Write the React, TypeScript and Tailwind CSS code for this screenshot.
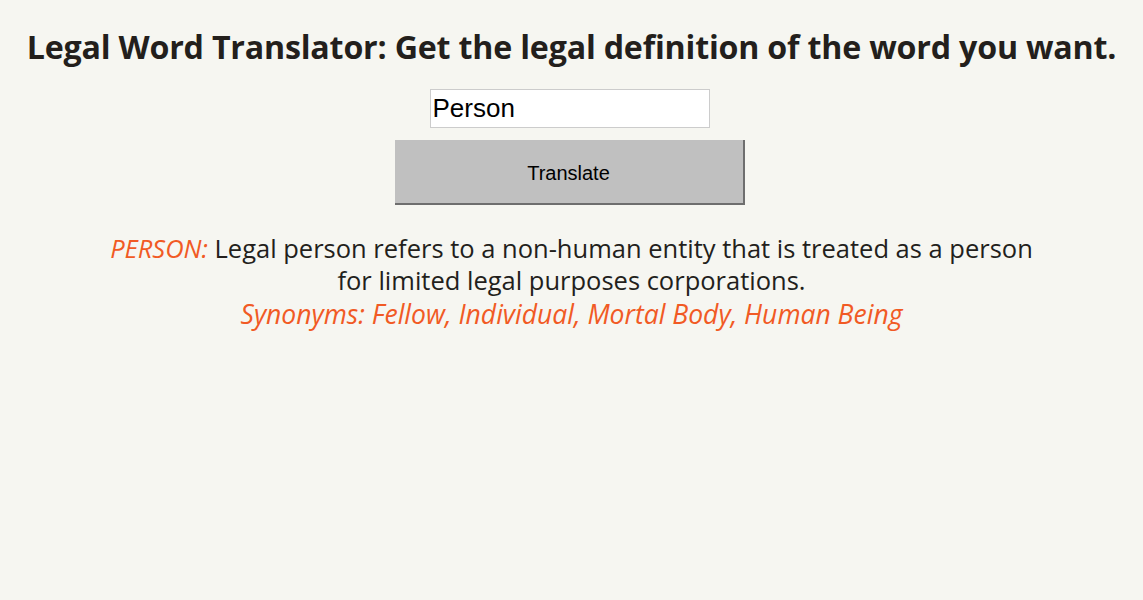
export default function App() {
  return (
    <div className="min-h-screen bg-[#f6f6f1] text-[#231f1c] font-['Open_Sans',sans-serif]">
      <div className="flex flex-col items-center pt-[24px]">
        <h1 className="text-[32.2px] leading-[46px] font-bold tracking-[-0.2px]">
          Legal Word Translator: Get the legal definition of the word you want.
        </h1>
        <input
          type="text"
          defaultValue="Person"
          className="mt-[19px] mr-[4px] w-[280px] h-[39px] bg-white border border-[#cccccc] px-[2px] text-[26px] text-black font-['Liberation_Sans',sans-serif] outline-none"
        />
        <button className="mt-[12px] mr-[4px] w-[350px] h-[65px] bg-[#c0c0c0] border-r-2 border-b-2 border-[#6e6e6e] pt-[2px] text-[20px] text-black font-['Liberation_Sans',sans-serif]">
          Translate
        </button>
        <div className="mt-[27px] w-[950px] text-center text-[25.5px] leading-[32px]">
          <p>
            <span className="italic text-[#f15a24]">PERSON:</span> Legal person refers to a non-human entity that is
            treated as a person for limited legal purposes corporations.
          </p>
          <p className="italic text-[#f15a24] text-[26.5px] leading-[36px]">
            Synonyms: Fellow, Individual, Mortal Body, Human Being
          </p>
        </div>
      </div>
    </div>
  );
}
